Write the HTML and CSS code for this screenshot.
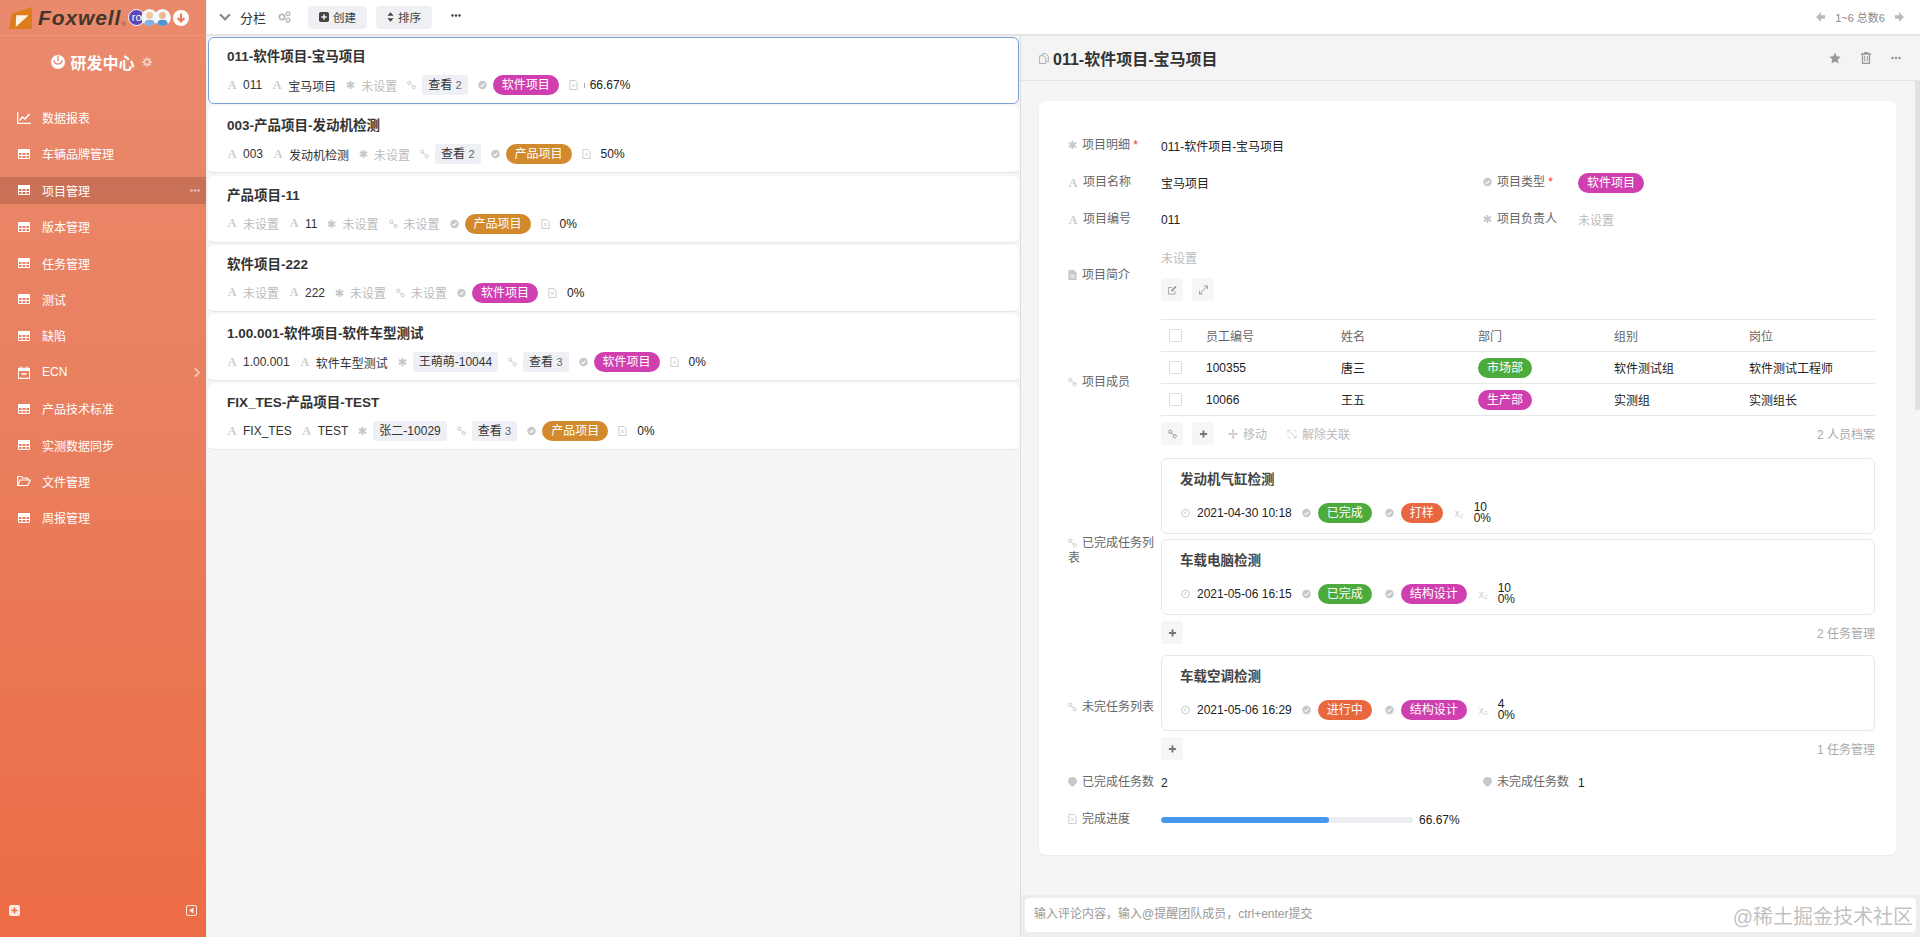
FILE: index.html
```html
<!DOCTYPE html>
<html lang="zh-CN">
<head>
    <meta charset="UTF-8">
    <title>项目管理</title>
    <link rel="stylesheet" href="styles.css">
</head>
<body>
<svg class="sprite" width="0" height="0">
    <symbol id="i-grid" viewBox="0 0 12 10"><path d="M.5.5h11v9H.5zM.5 3.5h11M.5 6.5h11M4 3.5v6M8 3.5v6" fill="none" stroke="currentColor"/><path d="M0 0h12v3.5H0z" fill="currentColor"/></symbol>
    <symbol id="i-chart" viewBox="0 0 14 12"><path d="M.7 0v11.3H14" fill="none" stroke="currentColor" stroke-width="1.2"/><path d="M2.5 8.5 5.5 5l2.5 2 4.5-5" fill="none" stroke="currentColor" stroke-width="1.5"/></symbol>
    <symbol id="i-cal" viewBox="0 0 12 13"><path d="M1 2.5h10a.7.7 0 0 1 .7.7v8.6a.7.7 0 0 1-.7.7H1a.7.7 0 0 1-.7-.7V3.200a.7.7 0 0 1 .7-.7zM3 .5v3M9 .5v3M3.500 8h5" fill="none" stroke="currentColor" stroke-width="1.300"/><path d="M.5 2.500h11V5H.5z" fill="currentColor"/></symbol>
    <symbol id="i-folder" viewBox="0 0 14 11"><path d="M.7 10V1h4l1 1.500h5v2M.7 10h10L13.300 4.500H3z" fill="none" stroke="currentColor" stroke-width="1.200"/></symbol>
    <symbol id="i-star6" viewBox="0 0 10 10"><path d="M5 .5v9M1 2.700l8 4.600M9 2.700 1 7.300" stroke="currentColor" stroke-width="2.200"/></symbol>
    <symbol id="i-link" viewBox="0 0 10 10"><circle cx="2.500" cy="2.500" r="1.800" fill="none" stroke="currentColor" stroke-width="1.100"/><circle cx="7.500" cy="7.500" r="1.800" fill="none" stroke="currentColor" stroke-width="1.100"/><path d="M3.500 3.500l3 3" stroke="currentColor" stroke-width="1.100"/></symbol>
    <symbol id="i-check" viewBox="0 0 10 10"><circle cx="5" cy="5" r="4.700" fill="currentColor"/><path d="M2.800 5.100 4.400 6.600 7.300 3.600" fill="none" stroke="#fff" stroke-width="1.200"/></symbol>
    <symbol id="i-file" viewBox="0 0 9 11"><path d="M.5.500h5.500l2.500 2.500v7.500H.5z" fill="none" stroke="currentColor"/><path d="M3 4.500l3 3M6 4.500l-3 3" stroke="currentColor"/></symbol>
    <symbol id="i-doc" viewBox="0 0 9 11"><path d="M0 0h6l3 3v8H0z" fill="currentColor"/><path d="M2 6h5M2 8h5" stroke="#fff"/></symbol>
    <symbol id="i-clock" viewBox="0 0 10 10"><circle cx="5" cy="5" r="4.300" fill="none" stroke="currentColor" stroke-width="1.100"/><path d="M5 2.500V5.300H3" fill="none" stroke="currentColor"/></symbol>
    <symbol id="i-gear" viewBox="0 0 10 10"><circle cx="5" cy="5" r="2.700" fill="none" stroke="currentColor" stroke-width="1.800"/><path d="M5 0v2M5 8v2M0 5h2M8 5h2M1.500 1.500 3 3M7 7l1.500 1.500M8.500 1.500 7 3M3 7 1.500 8.500" stroke="currentColor" stroke-width="1.400"/></symbol>
    <symbol id="i-gears" viewBox="0 0 13 12"><circle cx="4" cy="6" r="2.700" fill="none" stroke="currentColor" stroke-width="1.800"/><circle cx="10" cy="2.800" r="1.800" fill="none" stroke="currentColor" stroke-width="1.400"/><circle cx="10" cy="9.200" r="1.800" fill="none" stroke="currentColor" stroke-width="1.400"/></symbol>
    <symbol id="i-plus" viewBox="0 0 10 10"><path d="M5 1v8M1 5h8" stroke="currentColor" stroke-width="2.200"/></symbol>
    <symbol id="i-plusbox" viewBox="0 0 11 11"><rect width="11" height="11" rx="2" fill="currentColor"/><path d="M5.500 2.500v6M2.500 5.500h6" stroke="var(--cut, #fff)" stroke-width="1.600"/></symbol>
    <symbol id="i-sort" viewBox="0 0 8 11"><path d="M4 0l3.500 4H.5zM4 11 .5 7h7z" fill="currentColor"/></symbol>
    <symbol id="i-dots" viewBox="0 0 10 3"><circle cx="1.500" cy="1.500" r="1.300" fill="currentColor"/><circle cx="5" cy="1.500" r="1.300" fill="currentColor"/><circle cx="8.500" cy="1.500" r="1.300" fill="currentColor"/></symbol>
    <symbol id="i-left" viewBox="0 0 9 10"><path d="M5 0 0 5l5 5V6.800h4V3.200H5z" fill="currentColor"/></symbol>
    <symbol id="i-right" viewBox="0 0 9 10"><path d="M4 0l5 5-5 5V6.800H0V3.200h4z" fill="currentColor"/></symbol>
    <symbol id="i-star" viewBox="0 0 12 12"><path d="M6 .5l1.700 3.700 4 .5-3 2.700.8 4L6 9.500 2.500 11.400l.8-4-3-2.700 4-.5z" fill="currentColor"/></symbol>
    <symbol id="i-trash" viewBox="0 0 10 12"><path d="M0 2h10M3.500 2V.7h3V2M1.500 2.500v9h7v-9" fill="none" stroke="currentColor" stroke-width="1.300"/><path d="M3.700 4v5.500M6.300 4v5.500" stroke="currentColor"/></symbol>
    <symbol id="i-copy" viewBox="0 0 11 12"><path d="M3.500 3V.7h3.800L10.300 3.700v5.800H8M.7 3h4.500L7.500 5.500v6H.7z" fill="none" stroke="currentColor"/></symbol>
    <symbol id="i-edit" viewBox="0 0 11 11"><path d="M8.500 6.500v4H.5v-8h4.500" fill="none" stroke="currentColor"/><path d="M3.500 7.500 4 5.500 9 .7l1.500 1.500L5.500 7z" fill="currentColor"/></symbol>
    <symbol id="i-expand" viewBox="0 0 11 11"><path d="M6.500.5h4v4M4.500 10.500h-4v-4" fill="none" stroke="currentColor" stroke-width="1.200"/><path d="M10 1 1 10" stroke="currentColor" stroke-width="1.200"/></symbol>
    <symbol id="i-move" viewBox="0 0 11 11"><path d="M5.500 0 7.500 2.500h-4zM5.500 11l-2-2.500h4zM0 5.500l2.500-2v4zM11 5.500l-2.500 2v-4z" fill="currentColor"/><path d="M5.500 2v7M2 5.500h7" stroke="currentColor" stroke-width="1.400"/></symbol>
    <symbol id="i-unlink" viewBox="0 0 11 11"><path d="M1 4.500V1.500h3M10 6.500v3H7M4 9.500H2.500L1 8M7 1.500h1.500L10 3" fill="none" stroke="currentColor"/><path d="M3.500 3.500l4 4" stroke="currentColor"/></symbol>
    <symbol id="i-pin" viewBox="0 0 10 11"><path d="M5 0a5 5 0 0 1 5 4.800C10 8 5 11 5 11S0 8 0 4.800A5 5 0 0 1 5 0z" fill="currentColor"/></symbol>
    <symbol id="i-collapse" viewBox="0 0 11 11"><rect x=".5" y=".5" width="10" height="10" rx="1.500" fill="none" stroke="currentColor"/><path d="M7.500 2.500v6L3 5.500z" fill="currentColor"/></symbol>
</svg>

<div class="app">
    <aside class="sidebar">
        <div class="brand">
            <svg class="logo" viewBox="0 0 24 23"><path d="M3 7 24 0v23H0z" fill="#de7c1c"/><path d="M7.500 8.500h13L7 21z" fill="#fdf3e2"/></svg>
            <span class="wordmark">Foxwell</span><span class="reg">®</span>
            <div class="avatars">
                <span class="avatar avatar-text">ro</span>
                <svg class="avatar" viewBox="0 0 16 16"><circle cx="8" cy="8" r="8" fill="#f2f6fa"/><circle cx="8" cy="6" r="3.200" fill="#f3c79c"/><path d="M3 15c0-4 2-5 5-5s5 1 5 5a8 8 0 0 1-10 0z" fill="#7fb2de"/></svg>
                <svg class="avatar" viewBox="0 0 16 16"><circle cx="8" cy="8" r="8" fill="#f7fafc"/><circle cx="8" cy="6" r="3.200" fill="#eab68c"/><path d="M3 15c0-4 2-5 5-5s5 1 5 5a8 8 0 0 1-10 0z" fill="#4f93cf"/></svg>
            </div>
            <svg class="down" viewBox="0 0 16 16"><circle cx="8" cy="8" r="8" fill="#fff"/><path d="M8 3.500v8M4.500 8 8 11.500 11.500 8" fill="none" stroke="#e9785a" stroke-width="2"/></svg>
        </div>
        <div class="org">
            <svg class="org-icon" viewBox="0 0 14 14"><circle cx="7" cy="7" r="7" fill="#fff"/><path d="M7 1v5M3 5c0 3 2 4 4 4s4-1 4-4" fill="none" stroke="#e9856a" stroke-width="1.300"/></svg>
            <span>研发中心</span>
            <svg class="org-gear"><use href="#i-gear"/></svg>
        </div>
        <nav class="nav">
            <a class="nav-item"><svg class="nav-ic wide"><use href="#i-chart"/></svg>数据报表</a>
            <a class="nav-item"><svg class="nav-ic"><use href="#i-grid"/></svg>车辆品牌管理</a>
            <a class="nav-item active"><svg class="nav-ic"><use href="#i-grid"/></svg>项目管理<svg class="nav-dots"><use href="#i-dots"/></svg></a>
            <a class="nav-item"><svg class="nav-ic"><use href="#i-grid"/></svg>版本管理</a>
            <a class="nav-item"><svg class="nav-ic"><use href="#i-grid"/></svg>任务管理</a>
            <a class="nav-item"><svg class="nav-ic"><use href="#i-grid"/></svg>测试</a>
            <a class="nav-item"><svg class="nav-ic"><use href="#i-grid"/></svg>缺陷</a>
            <a class="nav-item"><svg class="nav-ic tall"><use href="#i-cal"/></svg>ECN<span class="nav-arrow"></span></a>
            <a class="nav-item"><svg class="nav-ic"><use href="#i-grid"/></svg>产品技术标准</a>
            <a class="nav-item"><svg class="nav-ic"><use href="#i-grid"/></svg>实测数据同步</a>
            <a class="nav-item"><svg class="nav-ic wide"><use href="#i-folder"/></svg>文件管理</a>
            <a class="nav-item"><svg class="nav-ic"><use href="#i-grid"/></svg>周报管理</a>
        </nav>
        <div class="side-foot">
            <svg class="foot-ic"><use href="#i-plusbox"/></svg>
            <svg class="foot-ic"><use href="#i-collapse"/></svg>
        </div>
    </aside>

    <main class="main">
        <header class="toolbar">
            <span class="chev"></span>
            <span class="view-name">分栏</span>
            <svg class="ic gears"><use href="#i-gears"/></svg>
            <button class="tbtn"><svg class="ic-11"><use href="#i-plusbox"/></svg>创建</button>
            <button class="tbtn"><svg class="ic-sort"><use href="#i-sort"/></svg>排序</button>
            <svg class="tdots"><use href="#i-dots"/></svg>
            <div class="pager">
                <svg class="ic"><use href="#i-left"/></svg>
                <span>1~6 总数6</span>
                <svg class="ic"><use href="#i-right"/></svg>
            </div>
        </header>

        <div class="content">
            <section class="list">
                <article class="card selected">
                    <h3>011-软件项目-宝马项目</h3>
                    <div class="meta">
                        <span class="m"><i class="fa">A</i>011</span>
                        <span class="m"><i class="fa">A</i>宝马项目</span>
                        <span class="m unset"><svg class="ic"><use href="#i-star6"/></svg>未设置</span>
                        <span class="m"><svg class="ic"><use href="#i-link"/></svg><span class="tag">查看 <small>2</small></span></span>
                        <span class="m"><svg class="ic"><use href="#i-check"/></svg><span class="pill magenta">软件项目</span></span>
                        <span class="m"><svg class="ic"><use href="#i-file"/></svg><span class="tick"></span>66.67%</span>
                    </div>
                </article>
                <article class="card">
                    <h3>003-产品项目-发动机检测</h3>
                    <div class="meta">
                        <span class="m"><i class="fa">A</i>003</span>
                        <span class="m"><i class="fa">A</i>发动机检测</span>
                        <span class="m unset"><svg class="ic"><use href="#i-star6"/></svg>未设置</span>
                        <span class="m"><svg class="ic"><use href="#i-link"/></svg><span class="tag">查看 <small>2</small></span></span>
                        <span class="m"><svg class="ic"><use href="#i-check"/></svg><span class="pill amber">产品项目</span></span>
                        <span class="m pct"><svg class="ic"><use href="#i-file"/></svg>50%</span>
                    </div>
                </article>
                <article class="card">
                    <h3>产品项目-11</h3>
                    <div class="meta">
                        <span class="m unset"><i class="fa">A</i>未设置</span>
                        <span class="m"><i class="fa">A</i>11</span>
                        <span class="m unset"><svg class="ic"><use href="#i-star6"/></svg>未设置</span>
                        <span class="m unset"><svg class="ic"><use href="#i-link"/></svg>未设置</span>
                        <span class="m"><svg class="ic"><use href="#i-check"/></svg><span class="pill amber">产品项目</span></span>
                        <span class="m pct"><svg class="ic"><use href="#i-file"/></svg>0%</span>
                    </div>
                </article>
                <article class="card">
                    <h3>软件项目-222</h3>
                    <div class="meta">
                        <span class="m unset"><i class="fa">A</i>未设置</span>
                        <span class="m"><i class="fa">A</i>222</span>
                        <span class="m unset"><svg class="ic"><use href="#i-star6"/></svg>未设置</span>
                        <span class="m unset"><svg class="ic"><use href="#i-link"/></svg>未设置</span>
                        <span class="m"><svg class="ic"><use href="#i-check"/></svg><span class="pill magenta">软件项目</span></span>
                        <span class="m pct"><svg class="ic"><use href="#i-file"/></svg>0%</span>
                    </div>
                </article>
                <article class="card">
                    <h3>1.00.001-软件项目-软件车型测试</h3>
                    <div class="meta">
                        <span class="m"><i class="fa">A</i>1.00.001</span>
                        <span class="m"><i class="fa">A</i>软件车型测试</span>
                        <span class="m"><svg class="ic"><use href="#i-star6"/></svg><span class="tag">王萌萌-10044</span></span>
                        <span class="m"><svg class="ic"><use href="#i-link"/></svg><span class="tag">查看 <small>3</small></span></span>
                        <span class="m"><svg class="ic"><use href="#i-check"/></svg><span class="pill magenta">软件项目</span></span>
                        <span class="m pct"><svg class="ic"><use href="#i-file"/></svg>0%</span>
                    </div>
                </article>
                <article class="card">
                    <h3>FIX_TES-产品项目-TEST</h3>
                    <div class="meta">
                        <span class="m"><i class="fa">A</i>FIX_TES</span>
                        <span class="m"><i class="fa">A</i>TEST</span>
                        <span class="m"><svg class="ic"><use href="#i-star6"/></svg><span class="tag">张二-10029</span></span>
                        <span class="m"><svg class="ic"><use href="#i-link"/></svg><span class="tag">查看 <small>3</small></span></span>
                        <span class="m"><svg class="ic"><use href="#i-check"/></svg><span class="pill amber">产品项目</span></span>
                        <span class="m pct"><svg class="ic"><use href="#i-file"/></svg>0%</span>
                    </div>
                </article>
            </section>

            <section class="detail">
                <div class="detail-head">
                    <svg class="ic copy"><use href="#i-copy"/></svg>
                    <h2>011-软件项目-宝马项目</h2>
                    <div class="head-actions">
                        <svg class="ic-12"><use href="#i-star"/></svg>
                        <svg class="ic-12"><use href="#i-trash"/></svg>
                        <svg class="ic-12 flat"><use href="#i-dots"/></svg>
                    </div>
                </div>
                <div class="detail-body">
                    <div class="scrollbar"></div>
                    <div class="form">
                        <div class="row">
                            <label class="lbl"><svg class="ic"><use href="#i-star6"/></svg>项目明细 <b>*</b></label>
                            <div class="val">011-软件项目-宝马项目</div>
                        </div>
                        <div class="row">
                            <div class="col">
                                <label class="lbl"><i class="fa">A</i>项目名称</label>
                                <div class="val">宝马项目</div>
                            </div>
                            <div class="col">
                                <label class="lbl lbl2"><svg class="ic"><use href="#i-check"/></svg>项目类型 <b>*</b></label>
                                <div class="val"><span class="pill magenta">软件项目</span></div>
                            </div>
                        </div>
                        <div class="row">
                            <div class="col">
                                <label class="lbl"><i class="fa">A</i>项目编号</label>
                                <div class="val">011</div>
                            </div>
                            <div class="col">
                                <label class="lbl lbl2"><svg class="ic"><use href="#i-star6"/></svg>项目负责人</label>
                                <div class="val none">未设置</div>
                            </div>
                        </div>
                        <div class="row row-intro">
                            <label class="lbl"><svg class="ic"><use href="#i-doc"/></svg>项目简介</label>
                            <div class="val">
                                <div class="none intro-text">未设置</div>
                                <div class="tools">
                                    <span class="sq"><svg class="ic"><use href="#i-edit"/></svg></span>
                                    <span class="sq"><svg class="ic"><use href="#i-expand"/></svg></span>
                                </div>
                            </div>
                        </div>
                        <div class="row row-block row-members">
                            <label class="lbl"><svg class="ic"><use href="#i-link"/></svg>项目成员</label>
                            <div class="val">
                                <table class="members">
                                    <colgroup><col class="c0"><col class="c1"><col class="c2"><col class="c3"><col class="c4"><col></colgroup>
                                    <thead>
                                        <tr><th><span class="cb"></span></th><th>员工编号</th><th>姓名</th><th>部门</th><th>组别</th><th>岗位</th></tr>
                                    </thead>
                                    <tbody>
                                        <tr><td><span class="cb"></span></td><td>100355</td><td>唐三</td><td><span class="pill green">市场部</span></td><td>软件测试组</td><td>软件测试工程师</td></tr>
                                        <tr><td><span class="cb"></span></td><td>10066</td><td>王五</td><td><span class="pill magenta">生产部</span></td><td>实测组</td><td>实测组长</td></tr>
                                    </tbody>
                                </table>
                                <div class="tools tools-bar">
                                    <span class="sq"><svg class="ic"><use href="#i-link"/></svg></span>
                                    <span class="sq"><svg class="ic dark"><use href="#i-plus"/></svg></span>
                                    <span class="ghost"><svg class="ic"><use href="#i-move"/></svg>移动</span>
                                    <span class="ghost"><svg class="ic"><use href="#i-unlink"/></svg>解除关联</span>
                                    <span class="count">2 人员档案</span>
                                </div>
                            </div>
                        </div>
                        <div class="row row-block row-done">
                            <label class="lbl"><svg class="ic"><use href="#i-link"/></svg>已完成任务列表</label>
                            <div class="val">
                                <div class="task">
                                    <h4>发动机气缸检测</h4>
                                    <div class="task-meta">
                                        <svg class="ic"><use href="#i-clock"/></svg><span>2021-04-30 10:18</span>
                                        <svg class="ic"><use href="#i-check"/></svg><span class="pill green">已完成</span>
                                        <svg class="ic"><use href="#i-check"/></svg><span class="pill red">打样</span>
                                        <i class="xs">x₂</i><span class="stack">10<br>0%</span>
                                    </div>
                                </div>
                                <div class="task">
                                    <h4>车载电脑检测</h4>
                                    <div class="task-meta">
                                        <svg class="ic"><use href="#i-clock"/></svg><span>2021-05-06 16:15</span>
                                        <svg class="ic"><use href="#i-check"/></svg><span class="pill green">已完成</span>
                                        <svg class="ic"><use href="#i-check"/></svg><span class="pill magenta">结构设计</span>
                                        <i class="xs">x₂</i><span class="stack">10<br>0%</span>
                                    </div>
                                </div>
                                <div class="tools tools-bar">
                                    <span class="sq"><svg class="ic dark"><use href="#i-plus"/></svg></span>
                                    <span class="count">2 任务管理</span>
                                </div>
                            </div>
                        </div>
                        <div class="row row-block row-todo">
                            <label class="lbl"><svg class="ic"><use href="#i-link"/></svg>未完任务列表</label>
                            <div class="val">
                                <div class="task">
                                    <h4>车载空调检测</h4>
                                    <div class="task-meta">
                                        <svg class="ic"><use href="#i-clock"/></svg><span>2021-05-06 16:29</span>
                                        <svg class="ic"><use href="#i-check"/></svg><span class="pill red">进行中</span>
                                        <svg class="ic"><use href="#i-check"/></svg><span class="pill magenta">结构设计</span>
                                        <i class="xs">x₂</i><span class="stack">4<br>0%</span>
                                    </div>
                                </div>
                                <div class="tools tools-bar">
                                    <span class="sq"><svg class="ic dark"><use href="#i-plus"/></svg></span>
                                    <span class="count">1 任务管理</span>
                                </div>
                            </div>
                        </div>
                        <div class="row row-stats">
                            <div class="col">
                                <label class="lbl"><svg class="ic"><use href="#i-pin"/></svg>已完成任务数</label>
                                <div class="val">2</div>
                            </div>
                            <div class="col">
                                <label class="lbl lbl2"><svg class="ic"><use href="#i-pin"/></svg>未完成任务数</label>
                                <div class="val">1</div>
                            </div>
                        </div>
                        <div class="row">
                            <label class="lbl"><svg class="ic"><use href="#i-file"/></svg>完成进度</label>
                            <div class="val progress-wrap">
                                <div class="progress"><div class="progress-fill" style="width: 66.67%"></div></div>
                                <span>66.67%</span>
                            </div>
                        </div>
                    </div>
                </div>
                <div class="comment">
                    <div class="comment-box">输入评论内容，输入@提醒团队成员，ctrl+enter提交</div>
                </div>
            </section>
        </div>
    </main>
</div>
<div class="watermark">@稀土掘金技术社区</div>
</body>
</html>
```

FILE: styles.css
```css
* {
    box-sizing: border-box;
}

html, body {
    height: 100%;
}

body {
    margin: 0;
    overflow: hidden;
    font-family: "Liberation Sans", "Noto Sans CJK SC", sans-serif;
    font-size: 12px;
    color: #333;
    background-color: #f5f5f5;
}

.sprite {
    position: absolute;
}

.app {
    display: flex;
    height: 100%;
}

/* sidebar */
.sidebar {
    width: 207px;
    flex: none;
    display: flex;
    flex-direction: column;
    color: #fff;
    background: linear-gradient(180deg, #ea8a6d 0%, #e97f5f 45%, #ec6c45 100%);
    border-right: 1px solid #eee;
}

.brand {
    height: 36px;
    display: flex;
    align-items: center;
    padding-left: 9px;
    border-bottom: 1px solid rgba(255,255,255,0.12);
}

.logo {
    width: 23px;
    height: 22px;
    flex: none;
}

.wordmark {
    margin-left: 6px;
    font-size: 21px;
    font-weight: bold;
    font-style: italic;
    color: #43362c;
    letter-spacing: 0.9px;
    line-height: 1;
}

.reg {
    font-size: 6px;
    color: #6b5040;
    margin-top: 12px;
}

.avatars {
    display: flex;
    margin-left: 2px;
}

.avatar {
    width: 17px;
    height: 17px;
    border-radius: 50%;
    margin-right: -4px;
    flex: none;
}

.avatar-text {
    background-color: #5e46b8;
    border: 1px solid #fff;
    font-size: 11px;
    line-height: 15px;
    text-align: left;
    padding-left: 3px;
    overflow: hidden;
}

.down {
    width: 16px;
    height: 16px;
    margin-left: 6px;
    flex: none;
}

.org {
    display: flex;
    align-items: center;
    justify-content: center;
    height: 51px;
    font-size: 16px;
    font-weight: bold;
    padding-right: 3px;
}

.org-icon {
    width: 14px;
    height: 14px;
    margin-right: 5px;
}

.org-gear {
    width: 10px;
    height: 10px;
    margin-left: 7px;
    color: rgba(255,255,255,0.55);
}

.nav {
    padding-top: 17px;
    display: flex;
    flex-direction: column;
    gap: 9.4px;
}

.nav-item {
    position: relative;
    height: 27px;
    display: flex;
    align-items: center;
    padding-left: 18px;
    color: #fff;
}

.nav-item.active {
    background-color: rgba(130,70,50,0.3);
}

.nav-ic {
    width: 12px;
    height: 10px;
    margin-right: 12px;
    flex: none;
}

.nav-ic.wide {
    width: 14px;
    height: 12px;
    margin-left: -1px;
    margin-right: 11px;
}

.nav-ic.tall {
    height: 13px;
}

.nav-dots {
    width: 10px;
    height: 3px;
    margin-left: auto;
    margin-right: 6px;
    color: rgba(255,255,255,0.55);
}

.nav-arrow {
    margin-left: auto;
    margin-right: 7px;
    width: 7px;
    height: 7px;
    border-top: 2px solid rgba(255,255,255,0.5);
    border-right: 2px solid rgba(255,255,255,0.5);
    transform: rotate(45deg);
}

.side-foot {
    margin-top: auto;
    height: 32px;
    display: flex;
    justify-content: space-between;
    padding: 0 9px;
}

.foot-ic {
    width: 11px;
    height: 11px;
    color: rgba(255,255,255,0.85);
    --cut: #ec6c45;
}

/* main area */
.main {
    flex: 1;
    min-width: 0;
    display: flex;
    flex-direction: column;
}

.toolbar {
    height: 36px;
    flex: none;
    display: flex;
    align-items: center;
    padding-left: 14px;
    background-color: #fff;
    border-bottom: 2px solid #e4e4e4;
}

.chev {
    width: 8px;
    height: 8px;
    margin-top: -4px;
    border-right: 2px solid #888;
    border-bottom: 2px solid #888;
    transform: rotate(45deg);
}

.view-name {
    margin-left: 11px;
    font-size: 13px;
    color: #333;
}

.ic {
    width: 9px;
    height: 10px;
    flex: none;
    color: #c8c8c8;
}

.gears {
    width: 13px;
    height: 12px;
    margin: 0 17px 0 12px;
    color: #bbb;
}

.tbtn {
    height: 23px;
    margin-right: 9px;
    padding: 0 11px;
    display: flex;
    align-items: center;
    gap: 4px;
    border: 0;
    border-radius: 4px;
    background-color: #eef0f4;
    font: inherit;
    font-size: 11.5px;
    color: #444;
}

.ic-11 {
    width: 10px;
    height: 10px;
    color: #444;
    --cut: #eef0f4;
}

.ic-sort {
    width: 7px;
    height: 10px;
    color: #444;
}

.tdots {
    width: 10px;
    height: 3px;
    margin-left: 10px;
    margin-top: -3px;
    color: #444;
}

.pager {
    margin-left: auto;
    margin-right: 16px;
    display: flex;
    align-items: center;
    gap: 10px;
    font-size: 11px;
    color: #888;
}

.pager .ic {
    color: #bbb;
}

.content {
    flex: 1;
    min-height: 0;
    display: flex;
}

/* card list */
.list {
    width: 814px;
    flex: none;
    padding: 1px 1px 0;
    display: flex;
    flex-direction: column;
    gap: 2.300px;
    border-right: 1px solid #ddd;
}

.card {
    height: 67px;
    flex: none;
    padding: 11px 18px 0;
    background-color: #fff;
    border: 1px solid transparent;
    border-bottom-color: #e6e6e6;
    border-radius: 6px;
}

.card.selected {
    border-color: #7c9fd8;
}

.card h3 {
    margin: 0 0 10px;
    font-size: 13.500px;
    line-height: 16px;
    font-weight: bold;
    color: #333;
}

.meta {
    display: flex;
    align-items: center;
    gap: 10px;
    height: 20px;
    white-space: nowrap;
}

.m {
    display: flex;
    align-items: center;
    gap: 6px;
}

.unset {
    color: #bbb;
}

.fa {
    font-family: "Liberation Serif", serif;
    font-style: normal;
    font-weight: bold;
    font-size: 12px;
    color: #ccc;
    width: 10px;
    text-align: center;
    flex: none;
}

.tag {
    display: inline-block;
    height: 20px;
    line-height: 20px;
    padding: 0 6px;
    border-radius: 3px;
    background-color: #eef0f6;
    color: #333;
}

.tag small {
    font-size: 11px;
    color: #666;
}

.pill {
    display: inline-block;
    height: 20px;
    line-height: 20px;
    padding: 0 9px;
    border-radius: 10px;
    color: #fff;
}

.magenta { background-color: #cf3fb0; }
.amber { background-color: #d28a2c; }
.green { background-color: #4cab3c; }
.red { background-color: #e8673f; }

.tick {
    width: 1px;
    height: 5px;
    margin-right: -1px;
    background-color: #aaa;
}

.pct {
    gap: 10px;
}

.pct,
.m:last-child {
    color: #222;
}

/* detail panel */
.detail {
    flex: 1;
    min-width: 0;
    display: flex;
    flex-direction: column;
}

.detail-head {
    height: 45px;
    flex: none;
    display: flex;
    align-items: center;
    padding: 0 19px 0 18px;
    background-color: #f4f4f4;
    border-bottom: 1px solid #e4e4e4;
}

.copy {
    width: 10px;
    height: 11px;
    margin-right: 4px;
    color: #aaa;
}

.detail-head h2 {
    margin: 0;
    font-size: 16px;
    font-weight: bold;
    color: #333;
}

.head-actions {
    margin-left: auto;
    display: flex;
    align-items: center;
    gap: 19px;
    color: #999;
}

.ic-12 {
    width: 12px;
    height: 12px;
}

.ic-12.flat {
    height: 4px;
    width: 10px;
}

.detail-body {
    position: relative;
    flex: 1;
    min-height: 0;
    padding: 20px 24px 0 18px;
    background-color: #f5f5f5;
}

.scrollbar {
    position: absolute;
    top: 0;
    right: 0;
    width: 5px;
    height: 329px;
    background-color: #e2e2e2;
}

.form {
    height: 754px;
    padding: 26px 21px 0 29px;
    background-color: #fff;
    border-radius: 6px;
    box-shadow: 0 1px 2px rgba(0,0,0,0.05);
}

.row {
    display: flex;
    align-items: center;
    min-height: 37px;
}

.col {
    display: flex;
    align-items: center;
}

.col:first-child {
    width: 415px;
}

.lbl {
    width: 93px;
    flex: none;
    line-height: 15px;
    color: #666;
}

.lbl2 {
    width: 95px;
}

.lbl .ic,
.lbl .fa {
    display: inline-block;
    vertical-align: -1px;
    margin-right: 5px;
}

.lbl b {
    color: #e33;
    font-weight: normal;
}

.val {
    flex: 1;
    min-width: 0;
    color: #222;
}

.none {
    color: #bbb;
}

.row-intro {
    margin-top: 7px;
    min-height: 60px;
}

.intro-text {
    margin-bottom: 12px;
}

.tools {
    display: flex;
    align-items: center;
    gap: 9px;
}

.sq {
    width: 22px;
    height: 23px;
    display: flex;
    align-items: center;
    justify-content: center;
    border-radius: 3px;
    background-color: #f6f6f6;
}

.sq .ic {
    color: #999;
}

.sq .dark {
    color: #777;
}

.row-members {
    margin-top: 8px;
    padding-top: 6px;
}

.members {
    width: 100%;
    table-layout: fixed;
    border-collapse: collapse;
    border-top: 1px solid #e8e8e8;
}

.c0 { width: 45px; }
.c1 { width: 135px; }
.c2 { width: 137px; }
.c3 { width: 136px; }
.c4 { width: 135px; }

.members th,
.members td {
    height: 32px;
    padding: 0;
    text-align: left;
    font-weight: normal;
    border-bottom: 1px solid #e8e8e8;
}

.members th {
    color: #666;
}

.members td {
    color: #222;
}

.cb {
    display: block;
    width: 13px;
    height: 13px;
    margin-left: 8px;
    border: 1px solid #ddd;
    border-radius: 1px;
}

.tools-bar {
    margin-top: 6px;
}

.ghost {
    display: flex;
    align-items: center;
    gap: 5px;
    margin-left: 5px;
    margin-right: 6px;
    color: #bbb;
}

.ghost .ic {
    width: 10px;
    height: 10px;
}

.count {
    margin-left: auto;
    color: #aaa;
}

.row-done {
    margin-top: 13px;
}

.row-todo {
    margin-top: 11px;
}

.task {
    height: 76px;
    margin-bottom: 5px;
    padding: 12px 18px 0;
    border: 1px solid #e8e8e8;
    border-radius: 6px;
}

.task h4 {
    margin: 0 0 14px;
    font-size: 13.500px;
    line-height: 18px;
    font-weight: bold;
    color: #444;
}

.task-meta {
    display: flex;
    align-items: center;
    gap: 7px;
    height: 20px;
    padding-left: 1px;
    color: #222;
}

.task-meta .pill {
    margin-right: 3px;
}

.task-meta span + .ic {
    margin-left: 3px;
}

.xs {
    font-style: normal;
    font-size: 10px;
    color: #ccc;
    margin-left: 2px;
    margin-right: 3px;
}

.stack {
    line-height: 11px;
    font-size: 12px;
}

.row-stats {
    margin-top: 4px;
}

.progress-wrap {
    display: flex;
    align-items: center;
    gap: 6px;
}

.progress {
    width: 252px;
    height: 6px;
    border-radius: 3px;
    background-color: #eceef3;
    overflow: hidden;
}

.progress-fill {
    height: 100%;
    border-radius: 3px;
    background-color: #4598f0;
}

.comment {
    height: 42px;
    flex: none;
    padding: 3px 4px 5px;
    background-color: #ededed;
}

.comment-box {
    height: 34px;
    line-height: 32px;
    padding-left: 9px;
    background-color: #fff;
    border-radius: 4px;
    color: #999;
}

.watermark {
    position: absolute;
    right: 7px;
    bottom: 7px;
    font-size: 20px;
    line-height: 26px;
    color: rgba(140,140,140,0.55);
}
```
